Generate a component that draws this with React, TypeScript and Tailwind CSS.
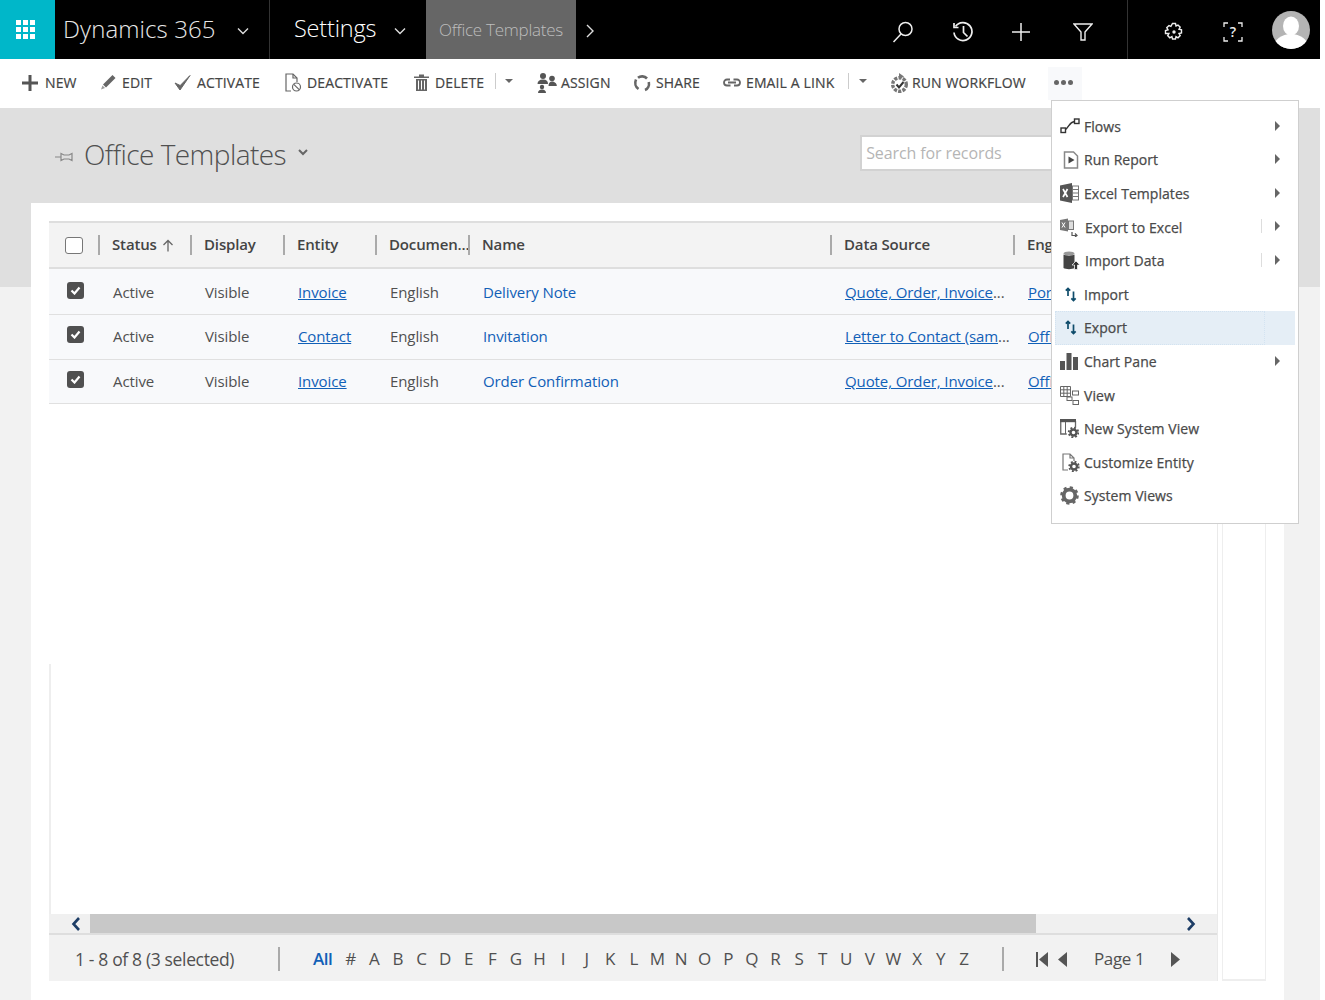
import React from "react";

const Chev = ({ className = "" }: { className?: string }) => (
  <svg viewBox="0 0 12 8" className={`w-[12px] h-[8px] ${className}`} fill="none" stroke="currentColor" strokeWidth="1.4"><path d="M1 1.5l5 5 5-5" /></svg>
);

const Caret = () => <span className="block w-0 h-0 border-x-[4px] border-x-transparent border-t-[4px] border-t-[#666]" />;

const CmdItem = ({ w, icon, label, gap }: { w: string; icon: React.ReactNode; label: string; gap: string }) => (
  <div className={`flex items-center h-full shrink-0 ${w}`}>
    <span className={`flex items-center justify-start shrink-0 ${gap}`}>{icon}</span>
    <span className="text-[14px] tracking-[0.12px] [-webkit-text-stroke:0.2px_#444] text-[#444] whitespace-nowrap">{label}</span>
  </div>
);

const I = "#555";

const Gear = ({ cx, cy, c = "#555" }: { cx: number; cy: number; c?: string }) => (
  <g fill="none" stroke={c}>
    <circle cx={cx} cy={cy} r="3" strokeWidth="2.4" />
    <circle cx={cx} cy={cy} r="4.8" strokeWidth="1.8" strokeDasharray="1.9 1.870" />
  </g>
);

const icons = {
  plus: <svg width="16" height="16" viewBox="0 0 16 16"><path d="M6.5 0h3v6.5H16v3H9.5V16h-3V9.5H0v-3h6.5z" fill={I} /></svg>,
  pencil: <svg width="16" height="17" viewBox="0 0 16 17"><path d="M12.5 1l3 3L6 13.5l-3-3z" fill="#666" /><path d="M2.5 11.5l2.500 2.500L1 15.500z" fill="#999" /></svg>,
  check: <svg width="17" height="17" viewBox="0 0 17 17" fill="none"><path d="M1 9l5 7L16 1.500 6.200 11.500z" fill="#666" stroke="#666" strokeWidth="1" /></svg>,
  doc: <svg width="17" height="20" viewBox="0 0 17 20" fill="none" stroke="#666" strokeWidth="1.200"><path d="M6 18H1V1h7l4 4v4" /><path d="M8 1v4h4" /><circle cx="11.5" cy="14" r="4" /><path d="M8.800 11.300l5.400 5.400" /></svg>,
  trash: <svg width="15" height="17" viewBox="0 0 15 17"><path d="M0 2.500h15v1.500H0zM5 .5h5v2H5z" fill="#666" /><path d="M2 5h11v12H2z" fill="#666" /><path d="M4.500 6.500v9M7.500 6.500v9M10.500 6.500v9" stroke="#fff" strokeWidth="1" /></svg>,
  assign: <svg width="20" height="20" viewBox="0 0 20 20" fill="#555"><circle cx="6" cy="3" r="3" /><path d="M.5 11c0-3 2-4.500 5.500-4.500S11 8 11 11z" /><circle cx="15" cy="5.500" r="2.800" /><path d="M11.500 13c0-3 1.300-4.500 3.500-4.500S19.800 10 19.800 13z" /><circle cx="5" cy="14" r="2.200" /><path d="M1 20c0-2 1.500-3.500 4-3.500S9 18 9 20z" /></svg>,
  share: <svg width="18" height="18" viewBox="0 0 18 18" fill="none" stroke="#666" strokeWidth="2.600"><path d="M3 5.500C1.500 9 2.500 13 5.500 15M12 16c3-1.200 4.500-4.500 3.800-8M14 4.500C11.500 1.800 7.500 1.800 5 3.800" /></svg>,
  link: <svg width="18" height="9" viewBox="0 0 18 9" fill="none" stroke="#666" strokeWidth="1.800"><path d="M7 1.500H4a3 3 0 000 6h3.500M11 7.500h3a3 3 0 000-6h-3.500M5 4.500h8" /></svg>,
  flow: <svg width="18" height="20" viewBox="0 0 18 20" fill="none"><circle cx="8.500" cy="11.500" r="6.800" stroke="#777" strokeWidth="3.400" strokeDasharray="3.200 1.200" /><path d="M8 0l5 3.500-5 3z" fill="#777" /><path d="M5.500 11.500l2.500 3 4.500-5.500" stroke="#333" strokeWidth="2" /></svg>,
};

const menuIcons: Record<string, React.ReactNode> = {
  Flows: <svg width="20" height="16" viewBox="0 0 20 16" fill="none" stroke="#333" strokeWidth="1.400"><rect x="1" y="10" width="4.500" height="4.500" /><rect x="14.500" y="1" width="4.500" height="4.500" /><path d="M5.500 11.500C9 9 9.500 4 14.500 3.500" /></svg>,
  "Run Report": <svg width="16" height="18" viewBox="0 0 16 18" fill="none" stroke="#888" strokeWidth="1.500" className="ml-[3px]"><path d="M1.500 1h9l4 4v12h-13z" /><path d="M5.500 5.500l6 3.500-6 3.500z" fill="#444" stroke="none" /></svg>,
  "Excel Templates": <svg width="19" height="20" viewBox="0 0 19 20"><path d="M0 2.500L12 0v20L0 17.500z" fill="#555" /><rect x="12.500" y="3" width="6" height="14" fill="none" stroke="#777" /><path d="M12.500 6.500h6M12.500 10h6M12.500 13.500h6" stroke="#777" /><path d="M3 6l4.500 8M7.500 6L3 14" stroke="#fff" strokeWidth="1.700" /></svg>,
  "Export to Excel": <svg width="18" height="19" viewBox="0 0 18 19"><path d="M0 2L8 .5v13L0 12z" fill="#777" /><rect x="8.500" y="3" width="5" height="8.500" fill="#ddd" stroke="#777" /><path d="M2 4.500l3 5M5 4.500l-3 5" stroke="#fff" /><path d="M12 14v3.500h5M15 15.500l2 2-2 1.500" stroke="#555" fill="none" strokeWidth="1.200" /></svg>,
  "Import Data": <svg width="18" height="19" viewBox="0 0 18 19" className="ml-[3px]"><ellipse cx="6" cy="2.500" rx="5.500" ry="2" fill="#999" /><path d="M.5 3.500c2 1.500 9 1.500 11 0V17c-2 1.500-9 1.500-11 0z" fill="#444" /><path d="M13 10l4 4h-2.500v4.500h-3V14H9z" fill="#333" stroke="#fff" strokeWidth=".7" /></svg>,
  Import: <svg width="12" height="15" viewBox="0 0 12 15" fill="none" stroke="#0f4c6b" strokeWidth="1.700" className="ml-[5px]"><path d="M3 9V1.500M.8 3.700L3 1.500l2.200 2.200" /><path d="M8.500 4.500v9M6.300 11.300l2.200 2.200 2.200-2.200" /></svg>,
  Export: <svg width="12" height="15" viewBox="0 0 12 15" fill="none" stroke="#0f4c6b" strokeWidth="1.700" className="ml-[5px]"><path d="M3 9V1.500M.8 3.700L3 1.500l2.200 2.200" /><path d="M8.500 4.500v9M6.300 11.300l2.200 2.200 2.200-2.200" /></svg>,
  "Chart Pane": <svg width="18" height="17" viewBox="0 0 18 17" fill="#555"><rect x="0" y="8" width="5" height="9" /><rect x="6.500" y="0" width="5" height="17" /><rect x="13" y="4" width="5" height="13" /></svg>,
  View: <svg width="19" height="19" viewBox="0 0 19 19" fill="none" stroke="#666"><path d="M.5.500h10v10H.500zM.5 3.800h10M.5 7.200h10M3.800.500v10M7.200.500v10" /><rect x="12.500" y="5" width="6" height="4" /><rect x="7" y="11" width="5" height="3.500" /><rect x="13" y="14.500" width="5.500" height="4" /></svg>,
  "New System View": <svg width="19" height="19" viewBox="0 0 19 19" fill="none"><path d="M.75 2v13h6M15.500 2v6" stroke="#666" strokeWidth="1.300" /><rect x="0" y="0" width="16" height="3.200" fill="#555" /><path d="M5.500 3v12" stroke="#666" /><Gear cx={13.500} cy={13.500} /></svg>,
  "Customize Entity": <svg width="19" height="19" viewBox="0 0 19 19" fill="none" className="ml-[1px]"><path d="M7 17H2V1h7l4 4v3M9 1v4h4" stroke="#777" strokeWidth="1.200" /><Gear cx={13} cy={13.500} /></svg>,
  "System Views": <svg width="19" height="19" viewBox="0 0 19 19" fill="none"><circle cx="9.500" cy="9.500" r="5.800" stroke="#666" strokeWidth="3.800" /><circle cx="9.500" cy="9.500" r="7.800" stroke="#666" strokeWidth="3" strokeDasharray="3 3.130" /></svg>,
};

const menu: { label: string; arrow?: boolean; sep?: boolean; hot?: boolean; shift?: boolean }[] = [
  { label: "Flows", arrow: true },
  { label: "Run Report", arrow: true },
  { label: "Excel Templates", arrow: true },
  { label: "Export to Excel", arrow: true, sep: true, shift: true },
  { label: "Import Data", arrow: true, sep: true, shift: true },
  { label: "Import" },
  { label: "Export", hot: true },
  { label: "Chart Pane", arrow: true },
  { label: "View" },
  { label: "New System View" },
  { label: "Customize Entity" },
  { label: "System Views" },
];

const rows = [
  { entity: "Invoice", name: "Delivery Note", source: "Quote, Order, Invoice", eng: "Portrait", h: "h-[46px] pt-[2px]", chk: "mb-[4px]" },
  { entity: "Contact", name: "Invitation", source: "Letter to Contact (sam", eng: "Office", h: "h-[45px] pb-[1px]", chk: "mb-[5px]" },
  { entity: "Invoice", name: "Order Confirmation", source: "Quote, Order, Invoice", eng: "Office", h: "h-[44px]", chk: "mb-[4px]" },
];

const GRID = "grid grid-cols-[49px_92px_93px_92px_93px_362px_183px_1fr]";

const Head = ({ label, children }: { label: string; children?: React.ReactNode }) => (
  <div className="flex items-center h-full min-w-0 overflow-hidden">
    <span className="block w-[2px] h-[20px] bg-[#aaa] shrink-0" />
    <span className="ml-[12px] mb-[1px] text-[15px] font-semibold tracking-[-0.15px] text-[#444] whitespace-nowrap">{label}</span>
    {children}
  </div>
);

const Check = ({ className }: { className: string }) => (
  <div className={`ml-[18px] w-[17px] h-[17px] rounded-[3px] bg-[#505050] flex items-center justify-center ${className}`}>
    <svg width="11" height="9" viewBox="0 0 11 9" fill="none" stroke="#fff" strokeWidth="2.200"><path d="M1.500 4.500l3 3 5-6" /></svg>
  </div>
);

const letters = "# A B C D E F G H I J K L M N O P Q R S T U V W X Y Z".split(" ");

export default function App() {
  return (
    <div className="w-[1320px] h-[1000px] overflow-hidden relative font-['Open_Sans',sans-serif] bg-[#f2f2f2]">
      {/* Top bar */}
      <header className="flex h-[59px] bg-black text-white">
        <div className="w-[55px] bg-[#00b7c9] flex items-center justify-center shrink-0 pr-[5px]">
          <div className="grid grid-cols-3 gap-[2px]">
            {Array.from({ length: 9 }).map((_, i) => <span key={i} className="block w-[5px] h-[5px] bg-white" />)}
          </div>
        </div>
        <div className="w-[215px] flex items-center border-r border-[#333] pl-[8px] shrink-0">
          <span className="text-[24px] font-light tracking-[0.1px] text-[#e8e8e8] whitespace-nowrap mb-[2px]">Dynamics 365</span>
          <Chev className="ml-[21px] mt-[3px] text-[#ddd]" />
        </div>
        <div className="w-[156px] flex items-center pl-[24px] shrink-0">
          <span className="text-[23.5px] font-light tracking-[-0.2px] whitespace-nowrap mb-[2px]">Settings</span>
          <Chev className="ml-[18px] mt-[3px] text-[#ddd]" />
        </div>
        <div className="w-[150px] bg-[#666] flex items-center justify-center shrink-0">
          <span className="text-[17px] font-light tracking-[-0.25px] text-[#bdbdbd] whitespace-nowrap mt-[1px]">Office Templates</span>
        </div>
        <div className="w-[552px] flex items-center pl-[10px] border-r border-[#333] shrink-0">
          <svg width="8" height="14" viewBox="0 0 8 14" fill="none" stroke="#ddd" strokeWidth="1.400" className="mt-[3px]"><path d="M1 1l6 6-6 6" /></svg>
          <div className="flex items-center ml-[298px] mt-[4px]">
            <svg width="22" height="22" viewBox="0 0 22 22" fill="none" stroke="#eee" strokeWidth="1.500"><circle cx="13.500" cy="8" r="6.500" /><path d="M9 13L1.500 21" /></svg>
            <svg width="22" height="22" viewBox="0 0 22 22" fill="none" stroke="#eee" strokeWidth="1.700" className="ml-[38px]"><path d="M3.500 5.500A9 9 0 112 11.500" /><path d="M2 2v4.500h4.500" /><path d="M11.500 5v6.500l4 4" /></svg>
            <svg width="20" height="20" viewBox="0 0 20 20" fill="none" stroke="#eee" strokeWidth="1.500" className="ml-[37px]"><path d="M10 1v18M1 10h18" /></svg>
            <svg width="20" height="20" viewBox="0 0 20 20" fill="none" stroke="#eee" strokeWidth="1.400" className="ml-[42px]"><path d="M1 2h18l-7 8v8H8v-8z" /></svg>
          </div>
        </div>
        <div className="flex items-center flex-1">
          <svg width="20" height="20" viewBox="0 0 20 20" fill="none" stroke="#eee" strokeWidth="1.400" className="ml-[36px] mt-[4px]"><path d="M8.500 1.500h3l.5 2.500 2-1 2.200 2.200-1.200 2 2.500.7v3l-2.500.6 1.200 2.100-2.200 2.200-2-1.200-.5 2.400h-3l-.6-2.400-2.100 1.200-2.100-2.200 1.200-2.100L1.500 11.500v-3L4 7.800 2.800 5.700 5 3.500 6.900 4.300z" /><circle cx="10" cy="10" r="1.700" fill="#eee" stroke="none" /></svg>
          <div className="ml-[39px] mt-[4px] relative w-[20px] h-[20px] flex items-center justify-center">
            <svg width="20" height="20" viewBox="0 0 20 20" fill="none" stroke="#eee" strokeWidth="1.300" className="absolute inset-0"><path d="M1 5V1h4M15 1h4v4M1 15v4h4M15 19h4v-4" /></svg>
            <span className="text-[14px] font-semibold text-[#eee]">?</span>
          </div>
          <svg width="38" height="38" viewBox="0 0 38 38" className="ml-[29px]"><defs><clipPath id="avatar"><circle cx="19" cy="19" r="19" /></clipPath></defs><g clipPath="url(#avatar)"><rect width="38" height="38" fill="#b4b4b4" /><ellipse cx="19" cy="15" rx="8" ry="9.500" fill="#fff" /><ellipse cx="19" cy="36" rx="17" ry="13" fill="#fff" /></g></svg>
        </div>
      </header>

      {/* Command bar */}
      <nav className="flex items-center h-[49px] bg-white pl-[22px] pb-[2px] relative">
        <CmdItem w="w-[78px]" gap="w-[23px]" icon={icons.plus} label="NEW" />
        <CmdItem w="w-[74px]" gap="w-[22px]" icon={icons.pencil} label="EDIT" />
        <CmdItem w="w-[111px]" gap="w-[23px]" icon={icons.check} label="ACTIVATE" />
        <CmdItem w="w-[129px]" gap="w-[22px]" icon={icons.doc} label="DEACTIVATE" />
        <CmdItem w="w-[81px]" gap="w-[21px]" icon={icons.trash} label="DELETE" />
        <div className="w-[42px] flex items-center shrink-0 h-full">
          <span className="block w-px h-[16px] bg-[#ccc] mb-[4px]" />
          <span className="ml-[9px] mb-[3px]"><Caret /></span>
        </div>
        <CmdItem w="w-[96px]" gap="w-[24px]" icon={icons.assign} label="ASSIGN" />
        <CmdItem w="w-[90px]" gap="w-[23px]" icon={icons.share} label="SHARE" />
        <CmdItem w="w-[125px]" gap="w-[23px]" icon={icons.link} label="EMAIL A LINK" />
        <div className="w-[43px] flex items-center shrink-0 h-full">
          <span className="block w-px h-[16px] bg-[#ccc] mb-[4px]" />
          <span className="ml-[10px] mb-[3px]"><Caret /></span>
        </div>
        <CmdItem w="w-[157px]" gap="w-[21px]" icon={icons.flow} label="RUN WORKFLOW" />
        <div className="w-[34px] h-[33px] mt-[2px] pb-[3px] pr-[4px] bg-[#f8f9fb] flex items-center justify-center gap-[2px] shrink-0">
          <span className="block w-[5px] h-[5px] rounded-full bg-[#666]" />
          <span className="block w-[5px] h-[5px] rounded-full bg-[#666]" />
          <span className="block w-[5px] h-[5px] rounded-full bg-[#666]" />
        </div>
      </nav>

      {/* Main */}
      <main className="h-[892px] bg-[linear-gradient(#dfdfdf_179px,#f2f2f2_179px)]">
        <div className="flex items-center h-[95px] pl-[55px] pb-[2px]">
          <svg width="18" height="10" viewBox="0 0 18 10" fill="none" stroke="#888" strokeWidth="1.200" className="mt-[5px]"><path d="M0 5h6M6 1.500l3 1.500h5l3-1.500v7l-3-1.500H9l-3 1.500z" /></svg>
          <h1 className="ml-[11px] mb-[2px] text-[28px] font-light tracking-[-0.55px] text-[#505050] whitespace-nowrap">Office Templates</h1>
          <svg width="10" height="7" viewBox="0 0 10 7" fill="none" stroke="#666" strokeWidth="2" className="ml-[12px] mb-[4px]"><path d="M1 1l4 4 4-4" /></svg>
          <div className="ml-[552px] mb-[3px] w-[250px] h-[36px] bg-white border-2 border-[#d2d2d2] border-r-0 flex items-center pl-[4px] shrink-0">
            <span className="text-[16px] tracking-[-0.1px] text-[#b5b5b5] whitespace-nowrap">Search for records</span>
          </div>
        </div>

        <section className="ml-[31px] w-[1253px] h-[797px] bg-white pl-[18px] pt-[18px] flex">
          <div className="w-[1169px] h-[760px] flex flex-col border-r border-[#eaeaea] shrink-0">
            {/* Table header */}
            <div className={`${GRID} h-[48px] bg-[#f3f3f3] border-y-2 border-[#dedede] items-center shrink-0`}>
              <div className="pl-[16px]"><span className="block w-[18px] h-[17px] rounded-[3px] border-[1.5px] border-[#777] bg-white" /></div>
              <Head label="Status">
                <svg width="12" height="13" viewBox="0 0 12 13" fill="none" stroke="#666" strokeWidth="1.300" className="ml-[5px] mt-[1px]"><path d="M6 12.500V1.500M1.500 6L6 1.500 10.500 6" /></svg>
              </Head>
              <Head label="Display" />
              <Head label="Entity" />
              <Head label="Documen..." />
              <Head label="Name" />
              <Head label="Data Source" />
              <Head label="Engine" />
            </div>
            {/* Rows */}
            {rows.map((r) => (
              <div key={r.name} className={`${GRID} ${r.h} bg-[#f8f9fb] border-b border-[#e0e0e0] items-center text-[15px] tracking-[-0.1px] text-[#505050] shrink-0`}>
                <Check className={r.chk} />
                <span className="pl-[15px]">Active</span>
                <span className="pl-[15px]">Visible</span>
                <span className="pl-[15px]"><a className="text-[#1160b7] underline">{r.entity}</a></span>
                <span className="pl-[15px]">English</span>
                <span className="pl-[15px] text-[#1160b7]">{r.name}</span>
                <span className="pl-[15px] whitespace-nowrap"><a className="text-[#1160b7] underline">{r.source}</a>...</span>
                <span className="pl-[15px]"><a className="text-[#1160b7] underline">{r.eng}</a></span>
              </div>
            ))}
            {/* Empty area */}
            <div className="h-[260px] shrink-0" />
            <div className="h-[250px] border-l-2 border-[#eeeeee] shrink-0" />
            {/* Scrollbar */}
            <div className="flex h-[21px] bg-[#f0f0f0] border-b-2 border-[#dedede] shrink-0">
              <div className="w-[41px] flex items-center justify-center text-[#1d3d66] shrink-0 pl-[12px]">
                <svg width="10" height="14" viewBox="0 0 10 14" fill="none" stroke="currentColor" strokeWidth="2.600"><path d="M8 1L2.500 7 8 13" /></svg>
              </div>
              <div className="w-[946px] bg-[#c8c8c8] shrink-0" />
              <div className="flex-1 flex items-center justify-end pr-[21px] text-[#1d3d66]">
                <svg width="10" height="14" viewBox="0 0 10 14" fill="none" stroke="currentColor" strokeWidth="2.600"><path d="M2 1l5.500 6L2 13" /></svg>
              </div>
            </div>
            {/* Pager */}
            <div className="flex items-center h-[46px] pt-[2px] bg-[#f2f2f2] shrink-0 text-[#505050]">
              <span className="ml-[26px] w-[203px] text-[17.5px] tracking-[-0.35px] whitespace-nowrap shrink-0">1 - 8 of 8 (3 selected)</span>
              <span className="block w-[2px] h-[24px] bg-[#aaa] shrink-0" />
              <span className="ml-[33px] w-[26px] text-[17px] font-semibold tracking-[-0.5px] text-[#1160b7] shrink-0">All</span>
              {letters.map((l) => (
                <span key={l} className="w-[23.6px] text-center text-[17px] shrink-0">{l}</span>
              ))}
              <span className="ml-[26px] block w-[2px] h-[24px] bg-[#aaa] shrink-0" />
              <span className="ml-[32px] block w-[2px] h-[15px] bg-[#555] shrink-0" />
              <svg width="10" height="15" viewBox="0 0 10 15" fill="#555" className="shrink-0"><path d="M10 0v15L1 7.500z" /></svg>
              <svg width="10" height="15" viewBox="0 0 10 15" fill="#555" className="ml-[9px] shrink-0"><path d="M10 0v15L1 7.500z" /></svg>
              <span className="ml-[27px] w-[77px] text-[17px] tracking-[-0.4px] whitespace-nowrap shrink-0">Page 1</span>
              <svg width="10" height="15" viewBox="0 0 10 15" fill="#555" className="shrink-0"><path d="M0 0v15l9-7.500z" /></svg>
            </div>
          </div>
          <div className="ml-[4px] w-[44px] h-[760px] border-x border-b-2 border-[#eeeeee] shrink-0" />
        </section>
      </main>

      {/* Overflow menu */}
      <div className="absolute left-[1051px] top-[100px] w-[248px] h-[424px] bg-white border border-[#cfcfcf] pt-[8.5px] pl-[3px] pr-[3px]">
        {menu.map((m) => (
          <div key={m.label} className={`relative flex items-center h-[33.6px] ${m.hot ? "bg-[#e5eef6]" : ""}`}>
            {m.hot && <span className="absolute left-0 top-0 bottom-0 w-[210px] border border-dotted border-[#d3e3f1]" />}
            <span className="w-[29px] pl-[5px] flex items-center justify-start shrink-0 relative">{menuIcons[m.label]}</span>
            <span className={`relative text-[14px] [-webkit-text-stroke:0.25px_#4a4a4a] tracking-[0.05px] text-[#4a4a4a] whitespace-nowrap ${m.shift ? "ml-[1px]" : ""}`}>{m.label}</span>
            {m.sep && <span className="absolute left-[206px] top-[9px] h-[14px] w-px bg-[#ddd]" />}
            {m.arrow && <span className="absolute left-[220px] top-[11px] w-0 h-0 border-y-[5px] border-y-transparent border-l-[5px] border-l-[#666]" />}
          </div>
        ))}
      </div>
    </div>
  );
}
